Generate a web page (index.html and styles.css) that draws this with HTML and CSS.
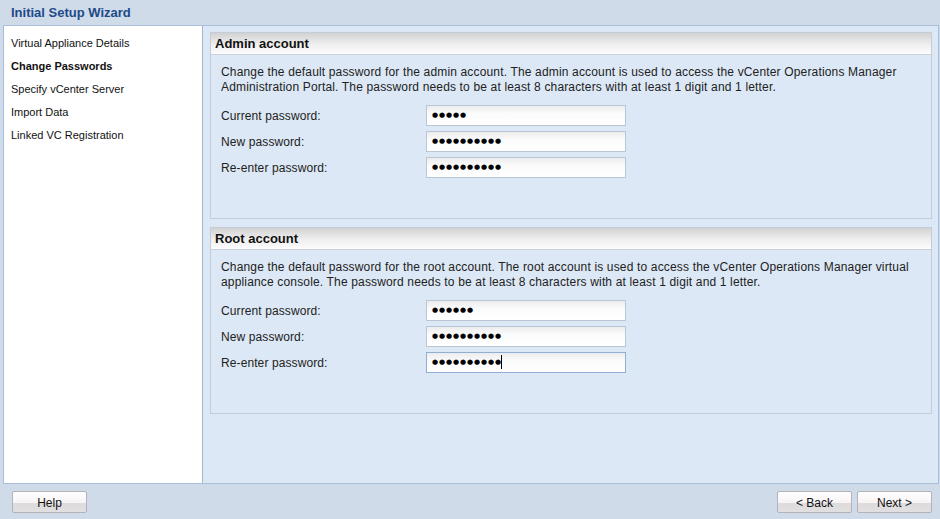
FILE: index.html
```html
<!DOCTYPE html>
<html>
<head>
<meta charset="utf-8">
<link rel="stylesheet" href="styles.css">
</head>
<body>
<div class="titlebar">Initial Setup Wizard</div>
<div class="main">
  <ul class="nav">
    <li>Virtual Appliance Details</li>
    <li class="active">Change Passwords</li>
    <li>Specify vCenter Server</li>
    <li>Import Data</li>
    <li>Linked VC Registration</li>
  </ul>
  <div class="content">
    <section class="panel">
      <div class="panel-head">Admin account</div>
      <div class="panel-body">
        <p class="desc">Change the default password for the admin account. The admin account is used to access the vCenter Operations Manager Administration Portal. The password needs to be at least 8 characters with at least 1 digit and 1 letter.</p>
        <div class="row"><span class="label">Current password:</span><div class="field">●●●●●</div></div>
        <div class="row"><span class="label">New password:</span><div class="field">●●●●●●●●●●</div></div>
        <div class="row"><span class="label">Re-enter password:</span><div class="field">●●●●●●●●●●</div></div>
      </div>
    </section>
    <section class="panel">
      <div class="panel-head">Root account</div>
      <div class="panel-body">
        <p class="desc">Change the default password for the root account. The root account is used to access the vCenter Operations Manager virtual appliance console. The password needs to be at least 8 characters with at least 1 digit and 1 letter.</p>
        <div class="row"><span class="label">Current password:</span><div class="field">●●●●●●</div></div>
        <div class="row"><span class="label">New password:</span><div class="field">●●●●●●●●●●</div></div>
        <div class="row"><span class="label">Re-enter password:</span><div class="field focus">●●●●●●●●●●<span class="caret"></span></div></div>
      </div>
    </section>
  </div>
</div>
<div class="footer">
  <button class="btn">Help</button>
  <div class="spacer"></div>
  <button class="btn">&lt; Back</button>
  <button class="btn">Next &gt;</button>
</div>
</body>
</html>
```
FILE: styles.css
```css
* { box-sizing: border-box; }
html, body { margin: 0; padding: 0; }
body {
  width: 940px;
  height: 519px;
  overflow: hidden;
  background: #cfdbe8;
  font-family: "Liberation Sans", Arial, sans-serif;
  font-size: 12px;
  color: #111;
}
.titlebar {
  height: 25px;
  line-height: 25px;
  padding-left: 11px;
  font-weight: bold;
  font-size: 13px;
  color: #1d4a8a;
}
.main {
  display: flex;
  height: 459px;
  margin: 0 1px 0 3px;
  border: 1px solid #a9bedb;
}
.nav {
  list-style: none;
  margin: 0;
  padding: 6px 0 0 7px;
  width: 199px;
  flex: none;
  background: #fff;
  border-right: 1px solid #a3b6cd;
  font-size: 11px;
}
.nav li {
  height: 23px;
  line-height: 23px;
  color: #111;
}
.nav li.active { font-weight: bold; }
.content {
  flex: 1;
  background: #dce8f5;
  padding: 6px 6px 0 7px;
  display: flex;
  flex-direction: column;
  gap: 8px;
}
.panel {
  height: 187px;
  border: 1px solid #c4ccd6;
  background: #dce8f5;
}
.panel-head {
  height: 22px;
  line-height: 22px;
  padding-left: 4px;
  font-weight: bold;
  font-size: 13px;
  color: #111;
  background: linear-gradient(#d2d2d2, #efefef 55%, #fefcfe);
  border-bottom: 1px solid #c8d0da;
}
.panel-body {
  padding: 10px 10px 0 10px;
}
.desc {
  margin: 0 0 10px 0;
  line-height: 15px;
  letter-spacing: 0.16px;
  color: #222;
}
.row {
  display: flex;
  align-items: center;
  height: 21px;
  margin-bottom: 5px;
}
.label {
  width: 205px;
  flex: none;
  color: #222;
  letter-spacing: 0.1px;
}
.field {
  width: 200px;
  height: 21px;
  border: 1px solid #b9c6d6;
  background: linear-gradient(#ececec, #fbfbfb 40%, #fff);
  font-family: "DejaVu Sans", sans-serif;
  font-size: 7px;
  letter-spacing: 0.9px;
  line-height: 19px;
  padding-left: 5px;
  color: #000;
}
.field.focus { border-color: #8fb0d2; }
.caret {
  display: inline-block;
  width: 1px;
  height: 14px;
  background: #000;
  vertical-align: middle;
  margin-left: -1px;
}
.footer {
  display: flex;
  padding: 7px 8px 0 12px;
  gap: 5px;
}
.spacer { flex: 1; }
.btn {
  width: 75px;
  height: 22px;
  padding: 1px 0 0 0;
  border: 1px solid #b3b3b8;
  border-radius: 2px;
  background: linear-gradient(#ffffff, #f7f3f5 55%, #dedbdd 56%, #e2dfe1);
  font-family: "Liberation Sans", Arial, sans-serif;
  font-size: 12px;
  color: #111;
}
```
